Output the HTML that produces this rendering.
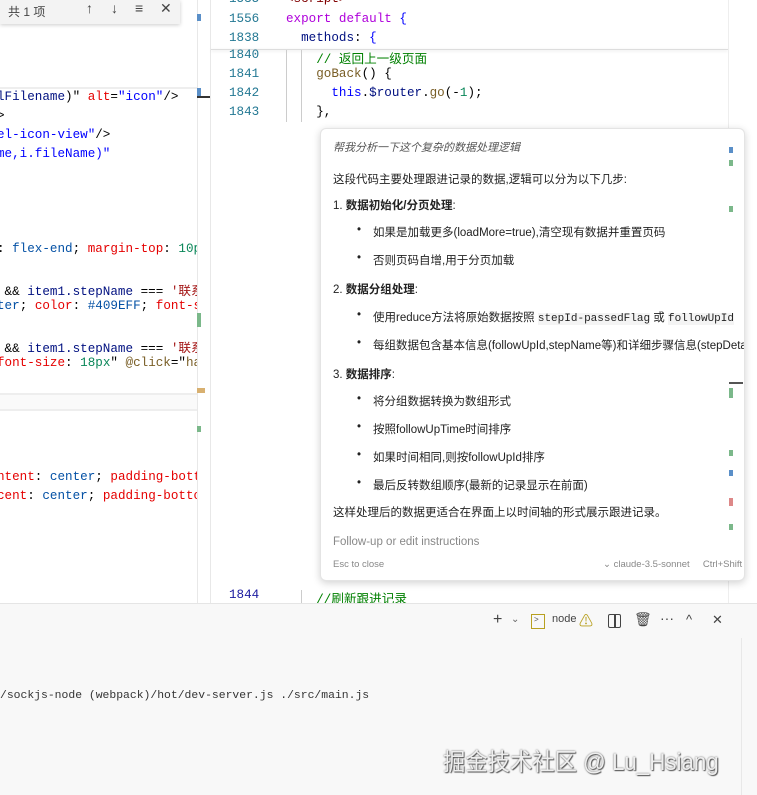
<!DOCTYPE html>
<html><head><meta charset="utf-8"><style>
*{margin:0;padding:0;box-sizing:border-box}
body{width:757px;height:795px;overflow:hidden;background:#fff;position:relative;font-family:"Liberation Sans","Noto Sans CJK SC",sans-serif}
.m{font-family:"Liberation Mono","Noto Sans CJK SC",monospace;font-size:12.6px;white-space:pre;position:absolute}
.ab{position:absolute}
.r{color:#e50000}.b{color:#0451a5}.bl{color:#0000ff}.p{color:#af00db}.g{color:#008000}.t{color:#267f99}.n{color:#098658}.dk{color:#001080}.s{color:#a31515}.f{color:#795e26}.ln{color:#237893}
.pop{position:absolute;left:320px;top:128px;width:425px;height:453px;background:#fff;border:1px solid #e4e4e4;border-radius:6px;box-shadow:0 2px 8px rgba(0,0,0,.18);font-size:11.5px;color:#222;overflow:hidden}
.pop div{position:absolute;left:12px;white-space:nowrap}
.pop b{font-weight:bold}
.bu{left:52px!important}
.bu::before{content:"•";position:absolute;left:-16px}
</style></head><body>
<div class="ab" style="left:0;top:0;width:197px;height:603px;background:#fff;overflow:hidden">
 <div class="ab" style="left:0;top:0;width:180px;height:24px;background:#f3f3f3;box-shadow:0 1px 4px rgba(0,0,0,.2);font-size:12px;color:#444"><span class="ab" style="left:8px;top:3px">共 1 项</span>
 <span class="ab" style="left:86px;top:0px;font-size:14px">↑</span><span class="ab" style="left:111px;top:0px;font-size:14px">↓</span><span class="ab" style="left:135px;top:0;font-size:14px">≡</span><span class="ab" style="left:160px;top:0;font-size:14px">✕</span></div>
 <div class="ab" style="left:0;top:87px;width:197px;height:2px;background:#eee"></div>
 <div class="m" style="left:-3px;top:90px"><span class="dk">lFilename</span>)" <span class="r">alt</span>=<span class="bl">"icon"</span>/&gt;</div>
 <div class="m" style="left:-3px;top:109px">&gt;</div>
 <div class="m" style="left:-3px;top:128px"><span class="bl">el-icon-view"</span>/&gt;</div>
 <div class="m" style="left:-3px;top:147px"><span class="bl">me,i.fileName)"</span></div>
 <div class="m" style="left:-3px;top:242px">: <span class="b">flex-end</span>; <span class="r">margin-top</span>: <span class="n">10px</span></div>
 <div class="m" style="left:-3px;top:280px"> &amp;&amp; <span class="dk">item1.stepName</span> === <span class="s">'联系</span></div>
 <div class="m" style="left:-3px;top:299px"><span class="b">ter</span>; <span class="r">color</span>: <span class="b">#409EFF</span>; <span class="r">font-si</span></div>
 <div class="m" style="left:-3px;top:337px"> &amp;&amp; <span class="dk">item1.stepName</span> === <span class="s">'联系</span></div>
 <div class="m" style="left:-3px;top:356px"><span class="r">font-size</span>: <span class="n">18px</span>" <span class="f">@click</span>="<span class="f">han</span></div>
 <div class="ab" style="left:0;top:393px;width:197px;height:18px;background:#fafafa;border-top:2px solid #eee;border-bottom:2px solid #eee"></div>
 <div class="m" style="left:-3px;top:470px"><span class="r">ntent</span>: <span class="b">center</span>; <span class="r">padding-botto</span></div>
 <div class="m" style="left:-3px;top:489px"><span class="r">cent</span>: <span class="b">center</span>; <span class="r">padding-bottom</span></div>
</div>
<div class="ab" style="left:197px;top:0;width:1px;height:603px;background:#e8e8e8"></div>
<div class="ab" style="left:197px;top:14px;width:4px;height:7px;background:#5a8fc8"></div>
<div class="ab" style="left:197px;top:88px;width:4px;height:8px;background:#5a8fc8"></div>
<div class="ab" style="left:197px;top:96px;width:14px;height:2px;background:#333"></div>
<div class="ab" style="left:197px;top:313px;width:4px;height:14px;background:#7bb88a"></div>
<div class="ab" style="left:197px;top:388px;width:8px;height:5px;background:#d8b070"></div>
<div class="ab" style="left:197px;top:426px;width:4px;height:6px;background:#7bb88a"></div>
<div class="ab" style="left:210px;top:0;width:1px;height:603px;background:#e8e8e8"></div>
<div class="m ln" style="left:229px;top:-8px">1535</div>
<div class="m" style="left:286px;top:-8px;color:#800000">&lt;script&gt;</div>
<div class="m ln" style="left:229px;top:12px">1556</div>
<div class="m" style="left:286px;top:12px"><span class="p">export default</span> <span class="bl">{</span></div>
<div class="m ln" style="left:229px;top:31px">1838</div>
<div class="m" style="left:286px;top:31px"><span class="dk">  methods</span>: <span class="bl">{</span></div>
<div class="ab" style="left:211px;top:49px;width:517px;height:1px;background:#ddd;box-shadow:0 1px 3px rgba(0,0,0,.15)"></div>
<div class="m ln" style="left:229px;top:48px">1840</div>
<div class="m g" style="left:286px;top:48px">    // 返回上一级页面</div>
<div class="m ln" style="left:229px;top:67px">1841</div>
<div class="m" style="left:286px;top:67px">    <span class="f">goBack</span>() {</div>
<div class="m ln" style="left:229px;top:86px">1842</div>
<div class="m" style="left:286px;top:86px">      <span class="bl">this</span>.<span class="dk">$router</span>.<span class="f">go</span>(-<span class="n">1</span>);</div>
<div class="m ln" style="left:229px;top:105px">1843</div>
<div class="m" style="left:286px;top:105px">    },</div>
<div class="ab" style="left:286px;top:50px;width:1px;height:72px;background:#ccc"></div>
<div class="ab" style="left:301px;top:50px;width:1px;height:72px;background:#ccc"></div>
<div class="ab" style="left:728px;top:0;width:1px;height:603px;background:#eee"></div>
<div class="pop">
 <div style="top:10px;font-style:italic;color:#555;font-size:11px">帮我分析一下这个复杂的数据处理逻辑</div>
 <div style="top:42px">这段代码主要处理跟进记录的数据,逻辑可以分为以下几步:</div>
 <div style="top:68px">1. <b>数据初始化/分页处理</b>:</div>
 <div class="bu" style="top:95px">如果是加载更多(loadMore=true),清空现有数据并重置页码</div>
 <div class="bu" style="top:123px">否则页码自增,用于分页加载</div>
 <div style="top:152px">2. <b>数据分组处理</b>:</div>
 <div class="bu" style="top:180px">使用reduce方法将原始数据按照 <code style="font-family:'Liberation Mono',monospace;background:#f4f4f4;font-size:11px">stepId-passedFlag</code> 或 <code style="font-family:'Liberation Mono',monospace;background:#f4f4f4;font-size:11px">followUpId</code></div>
 <div class="bu" style="top:208px">每组数据包含基本信息(followUpId,stepName等)和详细步骤信息(stepDetail)</div>
 <div style="top:237px">3. <b>数据排序</b>:</div>
 <div class="bu" style="top:264px">将分组数据转换为数组形式</div>
 <div class="bu" style="top:292px">按照followUpTime时间排序</div>
 <div class="bu" style="top:320px">如果时间相同,则按followUpId排序</div>
 <div class="bu" style="top:348px">最后反转数组顺序(最新的记录显示在前面)</div>
 <div style="top:375px">这样处理后的数据更适合在界面上以时间轴的形式展示跟进记录。</div>
 <div style="top:407px;color:#888">Follow-up or edit instructions</div>
 <div style="top:430px;color:#888;font-size:9.5px">Esc to close</div>
 <div style="top:430px;left:282px;color:#888;font-size:9.5px">⌄ claude-3.5-sonnet &nbsp;&nbsp;&nbsp; Ctrl+Shift</div>
</div>
<div class="ab" style="left:729px;top:147px;width:4px;height:6px;background:#5a8fc8"></div>
<div class="ab" style="left:729px;top:160px;width:4px;height:6px;background:#7bb88a"></div>
<div class="ab" style="left:729px;top:206px;width:4px;height:6px;background:#7bb88a"></div>
<div class="ab" style="left:729px;top:382px;width:14px;height:2px;background:#555"></div>
<div class="ab" style="left:729px;top:388px;width:4px;height:10px;background:#7bb88a"></div>
<div class="ab" style="left:729px;top:450px;width:4px;height:6px;background:#7bb88a"></div>
<div class="ab" style="left:729px;top:470px;width:4px;height:6px;background:#5a8fc8"></div>
<div class="ab" style="left:729px;top:498px;width:4px;height:8px;background:#d88"></div>
<div class="ab" style="left:729px;top:524px;width:4px;height:6px;background:#7bb88a"></div>
<div class="m ln" style="left:229px;top:588px;color:#1a1aa0">1844</div>
<div class="m g" style="left:286px;top:588px">    //刷新跟进记录</div>
<div class="ab" style="left:301px;top:590px;width:1px;height:13px;background:#ccc"></div>
<div class="ab" style="left:0;top:603px;width:757px;height:192px;background:#f8f8f8;border-top:1px solid #e5e5e5"></div>
<div class="ab" style="left:741px;top:638px;width:16px;height:157px;border-left:1px solid #e8e8e8"></div>
<div class="ab" style="left:493px;top:611px;font-size:16px;color:#444">+</div>
<div class="ab" style="left:511px;top:614px;font-size:10px;color:#666">⌄</div>
<div class="ab" style="left:531px;top:614px;width:14px;height:15px;border:1px solid #b8a020;font-size:8px;color:#555;padding-left:2px">&gt;</div>
<div class="ab" style="left:552px;top:613px;font-size:11px;color:#444">node</div>
<div class="ab" style="left:579px;top:611px;font-size:14px;color:#b8a020">⚠</div>
<div class="ab" style="left:608px;top:614px;width:13px;height:14px;border:1.5px solid #444;border-radius:2px"></div>
<div class="ab" style="left:614px;top:614px;width:1.5px;height:14px;background:#444"></div>
<div class="ab" style="left:634px;top:611px;font-size:14px;color:#444">🗑</div>
<div class="ab" style="left:660px;top:610px;font-size:14px;color:#444">···</div>
<div class="ab" style="left:686px;top:612px;font-size:13px;color:#444">^</div>
<div class="ab" style="left:712px;top:612px;font-size:13px;color:#444">✕</div>
<div class="m" style="left:0;top:690px;color:#333;font-size:11.4px">/sockjs-node (webpack)/hot/dev-server.js ./src/main.js</div>
<div class="ab" style="left:443px;top:742px;font-size:24px;color:#eee;text-shadow:1px 1px 1px #555,0 0 2px #666;white-space:nowrap;transform:scaleX(0.93);transform-origin:left">掘金技术社区 @ Lu_Hsiang</div>
</body></html>
